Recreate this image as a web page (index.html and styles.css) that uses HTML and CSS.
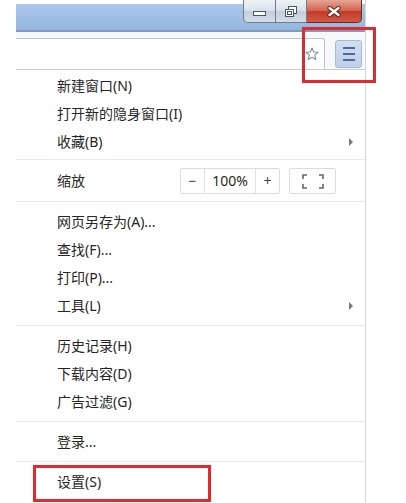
FILE: index.html
```html
<!DOCTYPE html>
<html lang="zh-CN">
<head>
  <meta charset="UTF-8">
  <title>菜单</title>
  <link rel="stylesheet" href="styles.css">
</head>
<body>
  <div class="window">
    <!-- Title bar with caption buttons -->
    <div class="titlebar">
      <div class="caption-buttons">
        <div class="cap-btn cap-min"><span class="min-glyph"></span></div>
        <div class="cap-btn cap-max">
          <svg width="12" height="11" viewBox="0 0 12 11">
            <rect x="3.5" y="0.5" width="8" height="7" fill="#fff" stroke="#4a5562"/>
            <rect x="0.5" y="3.5" width="8" height="7" fill="#fff" stroke="#4a5562"/>
            <rect x="2.5" y="5.5" width="4" height="3" fill="none" stroke="#4a5562"/>
          </svg>
        </div>
        <div class="cap-btn cap-close">
          <svg width="14" height="11" viewBox="0 0 14 11">
            <path d="M2.5 2 L11.5 9 M11.5 2 L2.5 9" stroke="#5a1e18" stroke-width="4.2" stroke-linecap="round"/>
            <path d="M2.5 2 L11.5 9 M11.5 2 L2.5 9" stroke="#fff" stroke-width="2.4" stroke-linecap="round"/>
          </svg>
        </div>
      </div>
    </div>

    <!-- Toolbar -->
    <div class="toolbar">
      <div class="omnibox">
        <svg class="star" width="14" height="14" viewBox="0 0 14 14">
          <path d="M7 1 L8.7 5 L13 5.3 L9.7 8.1 L10.8 12.5 L7 10.1 L3.2 12.5 L4.3 8.1 L1 5.3 L5.3 5 Z" fill="#fff" stroke="#7d8c9c" stroke-width="1.1" stroke-linejoin="round"/>
        </svg>
      </div>
      <div class="menu-btn">
        <span></span><span></span><span></span>
      </div>
    </div>

    <!-- Menu -->
    <div class="menu">
      <div class="section first">
        <div class="item">新建窗口(N)</div>
        <div class="item">打开新的隐身窗口(I)</div>
        <div class="item">收藏(B)<span class="arrow"></span></div>
      </div>
      <div class="section">
        <div class="item zoom-row">
          缩放
          <div class="zoom-controls">
            <div class="zoom-group">
              <span class="zoom-btn">−</span>
              <span class="zoom-value">100%</span>
              <span class="zoom-btn">+</span>
            </div>
            <div class="fullscreen">
              <svg width="22" height="15" viewBox="0 0 22 15">
                <path d="M1 5 V1 H5 M17 1 H21 V5 M21 10 V14 H17 M5 14 H1 V10" fill="none" stroke="#666" stroke-width="1.6"/>
              </svg>
            </div>
          </div>
        </div>
      </div>
      <div class="section">
        <div class="item">网页另存为(A)...</div>
        <div class="item">查找(F)...</div>
        <div class="item">打印(P)...</div>
        <div class="item">工具(L)<span class="arrow"></span></div>
      </div>
      <div class="section">
        <div class="item">历史记录(H)</div>
        <div class="item">下载内容(D)</div>
        <div class="item">广告过滤(G)</div>
      </div>
      <div class="section">
        <div class="item">登录...</div>
      </div>
      <div class="section">
        <div class="item">设置(S)</div>
      </div>
    </div>
  </div>

  <!-- Red annotation boxes -->
  <div class="mark mark-menu"></div>
  <div class="mark mark-settings"></div>
</body>
</html>
```

FILE: styles.css
```css
/* General */
body {
  margin: 0;
  background: #fff;
  font-family: "Noto Sans", "Noto Sans CJK SC", sans-serif;
  font-size: 14px;
  color: #262626;
  height: 503px;
  overflow: hidden;
  position: relative;
}

.window {
  margin-left: 16px;
  width: 350px;
  box-sizing: border-box;
  border-right: 1px solid #d4d6d9;
  min-height: 503px;
  background: #fff;
}

/* Title bar */
.titlebar {
  height: 32px;
  background: linear-gradient(to bottom, #fff 0, #fff 4px, #adc9ea 4px, #93b5de 30px, #7f9cc0 30px, #7f9cc0 32px);
}

.caption-buttons {
  display: flex;
  justify-content: flex-end;
  padding-right: 3px;
}

.cap-btn {
  height: 23px;
  box-sizing: border-box;
  border: 1px solid #6f7c8a;
  border-top: none;
  display: flex;
  justify-content: center;
  align-items: center;
  background: linear-gradient(to bottom, #eef2f7, #d7e0ea 50%, #c3cfdd 51%, #d4dde8);
}

.cap-min {
  width: 33px;
  border-radius: 0 0 0 5px;
  align-items: flex-end;
  padding-bottom: 6px;
}

.min-glyph {
  width: 11px;
  height: 3px;
  background: #fff;
  border: 1px solid #4a5562;
}

.cap-max {
  width: 31px;
  border-left: none;
}

.cap-close {
  width: 55px;
  border-left: none;
  border-color: #6a2b24;
  border-radius: 0 0 5px 0;
  background: linear-gradient(to bottom, #e7a696, #d2604c 50%, #c23a26 51%, #d45a43);
}

/* Toolbar */
.toolbar {
  display: flex;
  align-items: flex-end;
  padding-top: 5px;
  padding-right: 3px;
  height: 32px;
  background: #f6f8fa;
  border-bottom: 1px solid #c9cdd2;
}

.omnibox {
  width: 309px;
  height: 31px;
  box-sizing: border-box;
  background: #fff;
  border-top: 1px solid #bfc5cc;
  border-right: 1px solid #bfc5cc;
  border-radius: 0 3px 0 0;
  display: flex;
  justify-content: flex-end;
  align-items: center;
  padding-right: 5px;
}

.menu-btn {
  margin-left: auto;
  width: 27px;
  height: 28px;
  box-sizing: border-box;
  margin-bottom: 1px;
  background: linear-gradient(to bottom, #d3dff1, #bfd0ea);
  border: 1px solid #a6b9d6;
  border-radius: 3px;
  display: flex;
  flex-direction: column;
  justify-content: center;
  align-items: center;
  gap: 4px;
}

.menu-btn span {
  width: 12px;
  height: 2px;
  background: #4d6b9c;
}

/* Menu */
.section {
  padding: 6px 0 5px;
  border-top: 1px solid #e9e9e9;
}

.section.first {
  border-top: none;
  padding: 2px 0 3px;
}

.item {
  height: 28px;
  line-height: 28px;
  padding-left: 41px;
  padding-right: 12px;
  display: flex;
  align-items: center;
  white-space: nowrap;
}

.arrow {
  margin-left: auto;
  width: 0;
  height: 0;
  border-top: 4px solid transparent;
  border-bottom: 4px solid transparent;
  border-left: 4px solid #777;
}

/* Zoom row */
.zoom-row {
  height: 30px;
  padding-right: 29px;
}

.zoom-controls {
  margin-left: auto;
  display: flex;
  gap: 9px;
}

.zoom-group {
  display: flex;
  height: 26px;
  box-sizing: border-box;
  border: 1px solid #dcdcdc;
  border-radius: 2px;
  line-height: 24px;
}

.zoom-btn {
  width: 23px;
  text-align: center;
  color: #444;
}

.zoom-value {
  width: 50px;
  text-align: center;
  border-left: 1px solid #e2e2e2;
  border-right: 1px solid #e2e2e2;
}

.fullscreen {
  width: 47px;
  height: 26px;
  box-sizing: border-box;
  border: 1px solid #dcdcdc;
  border-radius: 2px;
  display: flex;
  justify-content: center;
  align-items: center;
}

/* Red annotation boxes */
.mark {
  position: absolute;
  border: 3px solid #dd2b2f;
  box-sizing: border-box;
}

.mark-menu {
  left: 302px;
  top: 27px;
  width: 74px;
  height: 56px;
}

.mark-settings {
  left: 33px;
  top: 465px;
  width: 178px;
  height: 37px;
}
```
